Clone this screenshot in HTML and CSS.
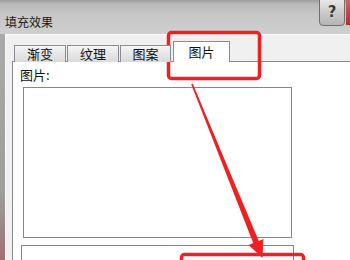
FILE: index.html
```html
<!doctype html>
<html lang="zh-CN">
<head>
  <meta charset="utf-8" />
  <title>填充效果</title>
  <link rel="stylesheet" href="styles.css">
</head>
<body>
  <div class="dialog">
    <div class="titlebar">
      <span class="title">填充效果</span>
      <div class="caption-btns">
        <span class="help">?</span>
        <span class="close"></span>
      </div>
    </div>
    <div class="frame">
      <div class="client">
        <div class="tabs">
          <div class="tab">渐变</div>
          <div class="tab">纹理</div>
          <div class="tab narrow">图案</div>
          <div class="tab active">图片</div>
        </div>
        <div class="panel">
          <div class="label">图片:</div>
          <div class="preview"></div>
          <div class="info"></div>
        </div>
      </div>
    </div>

    <!-- red annotation marks drawn over the dialog -->
    <svg class="annot" width="350" height="260" viewBox="0 0 350 260">
      <rect x="168.5" y="32.5" width="91" height="46" rx="3" fill="none" stroke="#ee2020" stroke-width="3.5"/>
      <rect x="181.5" y="254.5" width="122" height="20" rx="3" fill="none" stroke="#ee2020" stroke-width="3.5"/>
      <polygon fill="#ee2020" points="191.2,84.3 192.8,83.7 258.8,240.9 263.4,239.0 262.5,258 248.6,245.0 253.2,243.1"/>
    </svg>
  </div>
</body>
</html>
```

FILE: styles.css
```css
:root{
  --face:#f0f0f0; --line:#898c95; --red:#ee2020;
  font-family: "Noto Sans CJK SC", "Noto Sans", sans-serif;
}
body{margin:0;background:#fff;color:#111}
.dialog{position:relative;width:350px;height:260px;overflow:hidden}
.titlebar{height:34px;display:flex;align-items:flex-start;justify-content:space-between;background:linear-gradient(180deg,#9c9c9c 0,#b9b9b9 12%,#c6c6c6 40%,#cfcfcf 100%)}
.title{font-size:12px;line-height:14px;margin:15px 0 0 5px;color:#1a1a1a}
.caption-btns{display:flex;align-items:flex-start}
.help{width:24px;height:25px;margin-top:-1px;border:1px solid #707070;border-radius:0 0 4px 4px;background:linear-gradient(180deg,#e8e8e8,#c8c8c8 55%,#b4b4b4);font:bold 15px/24px "DejaVu Sans",sans-serif;color:#3a3a3a;text-align:center;text-shadow:0 0 1px #fff}
.close{width:4px;height:26px;margin-top:-1px;margin-left:1px;background:linear-gradient(180deg,#d86060,#c02828)}
.frame{height:226px;background:linear-gradient(180deg,#a9a9a9 0,#9d9d9d 70%,#a07070 100%);display:flex}
.client{flex:1;margin-left:5px;background:var(--face);border-top:1px solid #fbfbfb;border-left:1px solid #fbfbfb;padding:7px 0 0 6px}
.tabs{display:flex;align-items:flex-end;height:20px;margin-left:2px;margin-bottom:-1px;position:relative;z-index:1}
.tab{box-sizing:border-box;width:52px;height:17px;margin-right:1px;border:1px solid var(--line);border-bottom:none;background:linear-gradient(180deg,#f6f6f6,#e6e6e6 50%,#dadada);font-size:13px;line-height:16px;text-align:center;color:#111}
.tab.narrow{width:51px}
.tab.active{width:57px;height:21px;margin-left:1px;background:#fff;line-height:19px}
.panel{width:400px;height:220px;background:#fff;border:1px solid var(--line);padding:5px 0 0 7px;box-sizing:border-box}
.label{font-size:13px;line-height:16px;height:16px;color:#111}
.preview{width:269px;height:151px;margin:4px 0 0 3px;border:1px solid #828790;box-sizing:border-box}
.info{width:273px;height:40px;margin:7px 0 0 1px;border:1px solid #828790;box-sizing:border-box}
.annot{position:absolute;left:0;top:0}
```
